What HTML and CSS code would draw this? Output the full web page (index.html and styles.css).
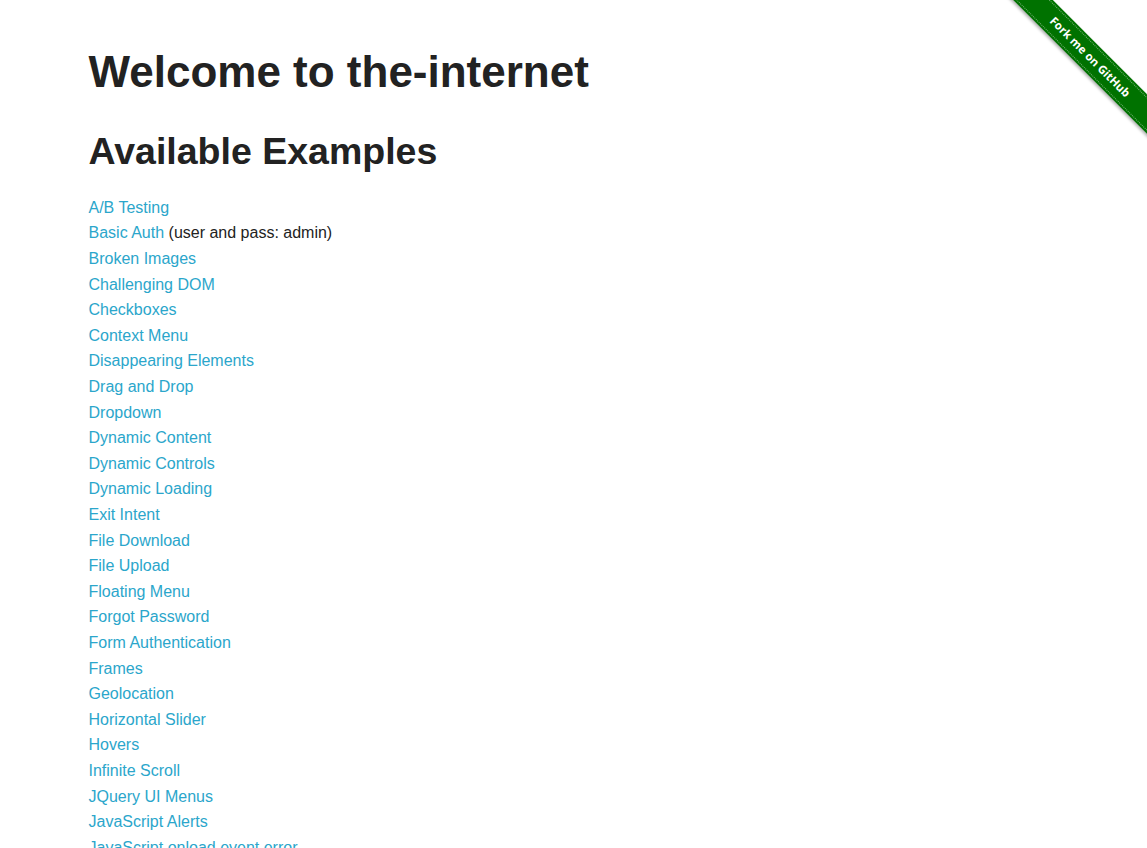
FILE: index.html
```html
<!DOCTYPE html>
<html>
<head>
<meta charset="utf-8">
<title>The Internet</title>
<link rel="stylesheet" href="styles.css">
</head>
<body>
<a class="ribbon" href="#"><span class="ribbon-band">Fork me on GitHub</span></a>
<div class="row">
  <div class="columns" id="content">
    <h1 class="heading">Welcome to the-internet</h1>
    <h2 class="subheading">Available Examples</h2>
    <ul class="examples">
      <li><a href="#">A/B Testing</a></li>
      <li><a href="#">Basic Auth</a> (user and pass: admin)</li>
      <li><a href="#">Broken Images</a></li>
      <li><a href="#">Challenging DOM</a></li>
      <li><a href="#">Checkboxes</a></li>
      <li><a href="#">Context Menu</a></li>
      <li><a href="#">Disappearing Elements</a></li>
      <li><a href="#">Drag and Drop</a></li>
      <li><a href="#">Dropdown</a></li>
      <li><a href="#">Dynamic Content</a></li>
      <li><a href="#">Dynamic Controls</a></li>
      <li><a href="#">Dynamic Loading</a></li>
      <li><a href="#">Exit Intent</a></li>
      <li><a href="#">File Download</a></li>
      <li><a href="#">File Upload</a></li>
      <li><a href="#">Floating Menu</a></li>
      <li><a href="#">Forgot Password</a></li>
      <li><a href="#">Form Authentication</a></li>
      <li><a href="#">Frames</a></li>
      <li><a href="#">Geolocation</a></li>
      <li><a href="#">Horizontal Slider</a></li>
      <li><a href="#">Hovers</a></li>
      <li><a href="#">Infinite Scroll</a></li>
      <li><a href="#">JQuery UI Menus</a></li>
      <li><a href="#">JavaScript Alerts</a></li>
      <li><a href="#">JavaScript onload event error</a></li>
      <li><a href="#">Key Presses</a></li>
      <li><a href="#">Large &amp; Deep DOM</a></li>
      <li><a href="#">Multiple Windows</a></li>
      <li><a href="#">Nested Frames</a></li>
      <li><a href="#">Notification Messages</a></li>
      <li><a href="#">Redirect Link</a></li>
      <li><a href="#">Secure File Download</a></li>
      <li><a href="#">Shadow DOM</a></li>
      <li><a href="#">Shifting Content</a></li>
      <li><a href="#">Slow Resources</a></li>
      <li><a href="#">Sortable Data Tables</a></li>
      <li><a href="#">Status Codes</a></li>
      <li><a href="#">Typos</a></li>
      <li><a href="#">WYSIWYG Editor</a></li>
    </ul>
  </div>
</div>
<div class="footer">
  <div class="row">
    <div class="columns">
      <hr>
      <div class="powered">Powered by <a href="#">Elemental Selenium</a></div>
    </div>
  </div>
</div>
</body>
</html>
```

FILE: styles.css
```css
html, body {
  margin: 0;
  padding: 0;
  background: #fff;
}
body {
  font-family: "Liberation Sans", Arial, Helvetica, sans-serif;
  font-size: 16px;
  line-height: 1.6;
  color: #222;
}
a {
  color: #2ba6cb;
  text-decoration: none;
}
.row {
  max-width: 1000px;
  margin: 0 auto;
}
.columns {
  padding: 0 15px;
}
#content {
  padding-top: 1px;
}
.heading {
  font-size: 44px;
  line-height: 1.25;
  font-weight: bold;
  color: #222;
  margin: 43px 0 0;
}
.subheading {
  font-size: 37.5px;
  line-height: 1.25;
  font-weight: bold;
  color: #222;
  margin: 29px 0 0;
}
.examples {
  list-style: none;
  margin: 20px 0 0;
  padding: 0;
}
.footer hr {
  border: 0;
  border-top: 1px solid #ddd;
  margin: 20px 0;
}
.powered {
  text-align: center;
  padding-bottom: 20px;
}
.ribbon {
  position: absolute;
  top: 0;
  right: 0;
  width: 149px;
  height: 149px;
  overflow: hidden;
  z-index: 10;
}
.ribbon-band {
  position: absolute;
  left: -8px;
  top: 43px;
  width: 200px;
  height: 28px;
  line-height: 28px;
  background: #007200;
  color: #fff;
  text-align: center;
  font-family: "Open Sans", "DejaVu Sans", sans-serif;
  font-weight: bold;
  font-size: 11.5px;
  transform: rotate(45deg);
  box-shadow: 0 2px 3px rgba(0, 0, 0, 0.3);
}
.ribbon-band::before {
  content: "";
  position: absolute;
  left: 0;
  right: 0;
  top: 2px;
  bottom: 2px;
  border-top: 1px dotted rgba(255, 255, 255, 0.45);
  border-bottom: 1px dotted rgba(255, 255, 255, 0.45);
}
```
